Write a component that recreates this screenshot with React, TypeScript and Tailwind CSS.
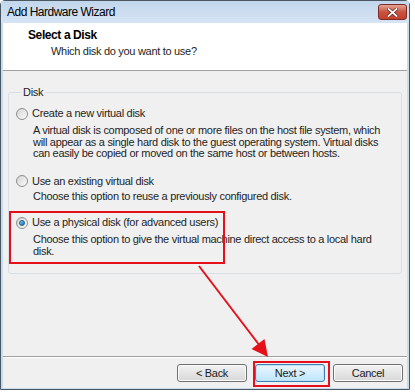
import React from "react";

function Radio({ checked }: { checked?: boolean }) {
    return (
        <span className="flex h-[12px] w-[12px] shrink-0 items-center justify-center rounded-full border border-[#8e8f8f] bg-gradient-to-br from-[#d4d4d4] to-[#fbfbfb]">
            {checked && (
                <span className="h-[6px] w-[6px] rounded-full border border-[#1d5d8f] bg-gradient-to-br from-[#7fd0f5] to-[#0f6ea8]" />
            )}
        </span>
    );
}

function Option({
    label,
    checked,
    children,
    labelTop,
    descTop,
}: {
    label: string;
    checked?: boolean;
    children: React.ReactNode;
    labelTop: string;
    descTop: string;
}) {
    return (
        <div className={labelTop}>
            <div className="flex h-[13px] items-center gap-[4px] leading-[13px]">
                <Radio checked={checked} />
                <span>{label}</span>
            </div>
            <p className={`ml-[17px] whitespace-nowrap leading-[11.5px] ${descTop}`}>
                {children}
            </p>
        </div>
    );
}

function Button({ children, primary }: { children: React.ReactNode; primary?: boolean }) {
    return (
        <button
            className={
                "h-[18px] w-[70px] rounded-[3px] border text-[11px] leading-[16px] text-[#1a1a1a] " +
                (primary
                    ? "border-[#3c7fb1] bg-gradient-to-b from-[#eaf6fd] to-[#bee6fd] shadow-[inset_0_0_0_1px_#bde4f6]"
                    : "border-[#707070] bg-gradient-to-b from-[#f2f2f2] to-[#d8d8d8] shadow-[inset_0_0_0_1px_#fcfcfc]")
            }
        >
            {children}
        </button>
    );
}

export default function App() {
    return (
        <div className="relative h-[392px] w-[415px] overflow-hidden bg-white font-['Liberation_Sans',Arial,sans-serif] text-[11px] tracking-[-0.3px] text-[#1e1e1e]">
            {/* Window */}
            <div className="flex h-[390px] w-[410px] flex-col rounded-t-[5px] border border-[#4b5663] bg-[#c9dbee]">
                {/* Title bar */}
                <div className="flex h-[22px] shrink-0 items-center justify-between bg-gradient-to-b from-[#c2d6ec] to-[#d6e4f3] pl-[6px] pr-[2px]">
                    <span className="text-[12px] leading-[14px] tracking-[-0.5px] text-black">Add Hardware Wizard</span>
                    <span className="flex h-[16px] w-[29px] items-center justify-center rounded-[3px] border border-[#7a2b24] bg-gradient-to-b from-[#e4a496] via-[#c9523f] to-[#c3402c]">
                        <svg width="11" height="9" viewBox="0 0 11 9">
                            <path d="M1.5 1 L9.5 8 M9.5 1 L1.5 8" stroke="#4a1a14" strokeWidth="3" strokeLinecap="square" />
                            <path d="M1.5 1 L9.5 8 M9.5 1 L1.5 8" stroke="#ffffff" strokeWidth="1.8" strokeLinecap="square" />
                        </svg>
                    </span>
                </div>

                {/* Client area */}
                <div className="mx-[2px] mb-[1px] flex flex-1 flex-col bg-[#f0f0f0]">
                    {/* Header */}
                    <div className="h-[48px] shrink-0 border-b border-[#a0a0a0] bg-white pl-[25px] pt-[5px]">
                        <div className="text-[12px] font-bold leading-[14px] tracking-[-0.4px] text-black">Select a Disk</div>
                        <div className="ml-[23px] mt-[3px] leading-[13px]">Which disk do you want to use?</div>
                    </div>

                    {/* Group */}
                    <div className="flex-1 px-[5px] pt-[15px]">
                        <fieldset className="h-[188px] rounded-[3px] border border-[#d5dfe5] pl-[7px]">
                            <legend className="ml-[5px] px-[2px] leading-[13px]">Disk</legend>
                            <Option label="Create a new virtual disk" labelTop="mt-[8px]" descTop="mt-[5px]">
                                A virtual disk is composed of one or more files on the host file system, which
                                <br />
                                will appear as a single hard disk to the guest operating system. Virtual disks
                                <br />
                                can easily be copied or moved on the same host or between hosts.
                            </Option>
                            <Option label="Use an existing virtual disk" labelTop="mt-[15px]" descTop="mt-[3px]">
                                Choose this option to reuse a previously configured disk.
                            </Option>
                            <Option label="Use a physical disk (for advanced users)" checked labelTop="mt-[14px]" descTop="mt-[5px]">
                                Choose this option to give the virtual machine direct access to a local hard
                                <br />
                                disk.
                            </Option>
                        </fieldset>
                    </div>

                    {/* Buttons */}
                    <div className="flex h-[32px] shrink-0 justify-end gap-[8px] border-t border-[#a0a0a0] pr-[4px] pt-[7px] shadow-[inset_0_1px_0_#ffffff]">
                        <Button>&lt; Back</Button>
                        <Button primary>Next &gt;</Button>
                        <Button>Cancel</Button>
                    </div>
                </div>
            </div>

            {/* Annotations */}
            <div className="pointer-events-none absolute left-[9px] top-[211px] h-[53px] w-[216px] border-2 border-[#e5101a]" />
            <div className="pointer-events-none absolute left-[253px] top-[361px] h-[26px] w-[77px] border-2 border-[#e5101a]" />
            <svg className="pointer-events-none absolute left-0 top-0" width="415" height="392">
                <line x1="199" y1="266" x2="260" y2="346" stroke="#e5101a" strokeWidth="2" />
                <polygon points="268,357 251.5,349 264.5,339" fill="#e5101a" />
            </svg>
        </div>
    );
}
